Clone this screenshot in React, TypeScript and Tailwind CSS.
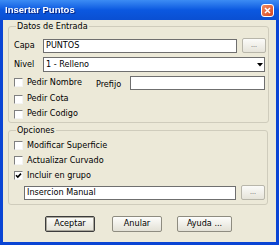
import React from 'react';

const font = { fontFamily: "'Liberation Sans Narrow', 'DejaVu Sans Condensed', 'Liberation Sans', sans-serif" };

const Check = ({ label, checked = false }: { label: string; checked?: boolean }) => (
  <div className="flex items-center h-[15px] gap-[4px]">
    <div className="w-[9px] h-[9px] bg-white border border-t-[#808080] border-l-[#808080] border-b-[#f4f4f4] border-r-[#f4f4f4] flex items-center justify-center">
      {checked && (
        <svg width="7" height="7" viewBox="0 0 7 7">
          <path d="M1 3.2 L2.8 5 L6 1.6" stroke="#000" strokeWidth="1.6" fill="none" />
        </svg>
      )}
    </div>
    <span>{label}</span>
  </div>
);

const TextBox = ({ value = '', className = '' }: { value?: string; className?: string }) => (
  <div className={`h-[14px] bg-white border border-[#6f6f6f] flex items-center px-[2px] leading-none ${className}`}>
    {value}
  </div>
);

const Dots = () => (
  <div className="w-[24px] h-[15px] rounded-[2px] border border-[#b8b6aa] bg-gradient-to-b from-[#fbfbf9] to-[#e6e4da] flex items-center justify-center text-[#555] text-[7px]">
    ...
  </div>
);

const Btn = ({ label, className = '', def = false }: { label: string; className?: string; def?: boolean }) => (
  <div
    className={`h-[16px] rounded-[2px] flex items-center justify-center bg-gradient-to-b from-[#fdfdfb] to-[#e3e1d6] ${
      def ? 'border border-[#3c3c3c] shadow-[inset_0_0_0_1px_#a9a79c]' : 'border border-[#8e8c80]'
    } ${className}`}
  >
    {label}
  </div>
);

export default function App() {
  return (
    <div className="w-[279px] h-[245px] flex flex-col bg-[#0a45d4] text-[9px] text-black" style={font}>
      {/* Title bar */}
      <div className="h-[20px] shrink-0 flex items-center justify-between pl-[5px] pr-[5px] bg-gradient-to-b from-[#3c8cf4] via-[#0b58e0] to-[#0a4fd2]">
        <span
          className="text-white font-bold text-[9.5px] drop-shadow-[1px_1px_0_#0a2a8a]"
          style={{ fontFamily: "'Liberation Sans', sans-serif" }}
        >
          Insertar Puntos
        </span>
        <div className="w-[13px] h-[13px] rounded-[3px] border border-white bg-gradient-to-br from-[#f08a60] to-[#d3431c] flex items-center justify-center">
          <svg width="7" height="7" viewBox="0 0 7 7">
            <path d="M1 1 L6 6 M6 1 L1 6" stroke="#fff" strokeWidth="1.5" />
          </svg>
        </div>
      </div>

      {/* Body */}
      <div className="flex-1 mx-[3px] mb-[3px] bg-[#ece9d8] pl-[5px] pr-[8px] pt-[1px] flex flex-col">
        <fieldset className="border border-[#cfccbc] rounded-[3px] pl-[5px] pr-[2px] pb-[2px] h-[102px]">
          <legend className="ml-[2px] px-[1px] leading-[11px]">Datos de Entrada</legend>
          <div className="flex items-center mt-[6px] h-[15px]">
            <span className="w-[29px]">Capa</span>
            <TextBox value="PUNTOS" className="w-[194px]" />
            <div className="ml-[5px]"><Dots /></div>
          </div>
          <div className="flex items-center mt-[4px] h-[15px]">
            <span className="w-[29px]">Nivel</span>
            <div className="w-[222px] h-[15px] bg-white border border-[#6f6f6f] flex items-center justify-between pl-[2px] pr-[1px]">
              <span>1 - Relleno</span>
              <svg width="6" height="4" viewBox="0 0 6 4">
                <path d="M0 0 H6 L3 3.5 Z" fill="#000" />
              </svg>
            </div>
          </div>
          <div className="flex items-center mt-[2px]">
            <div className="w-[82px]"><Check label="Pedir Nombre" /></div>
            <span className="w-[34px] mt-[4px]">Prefijo</span>
            <TextBox className="w-[135px]" />
          </div>
          <Check label="Pedir Cota" />
          <Check label="Pedir Codigo" />
        </fieldset>

        <fieldset className="border border-[#cfccbc] rounded-[3px] pl-[5px] pr-[2px] h-[80px] mt-[2px]">
          <legend className="ml-[2px] px-[1px] leading-[11px]">Opciones</legend>
          <div className="mt-[2px]"><Check label="Modificar Superficie" /></div>
          <Check label="Actualizar Curvado" />
          <Check label="Incluir en grupo" checked />
          <div className="flex items-center mt-[2px] ml-[10px]">
            <TextBox value="Insercion Manual" className="w-[212px]" />
            <div className="ml-[5px]"><Dots /></div>
          </div>
        </fieldset>

        <div className="flex mt-[11px] h-[16px]">
          <Btn label="Aceptar" def className="ml-[37px] w-[50px]" />
          <Btn label="Anular" className="ml-[17px] w-[50px]" />
          <Btn label="Ayuda ..." className="ml-[15px] w-[55px]" />
        </div>
      </div>
    </div>
  );
}
